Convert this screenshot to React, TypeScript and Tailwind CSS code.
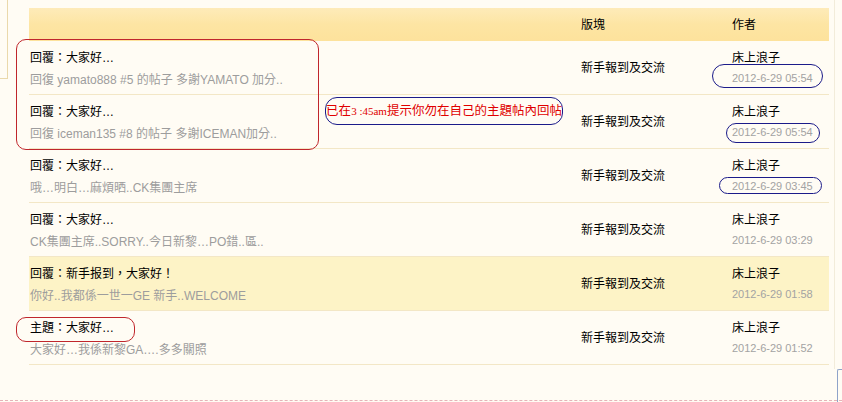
import React from 'react';

type Post = {
  title: string;
  summary: string;
  forum: string;
  author: string;
  date: string;
  hot?: boolean;
};

const posts: Post[] = [
  { title: '回覆：大家好…', summary: '回復 yamato888 #5 的帖子 多謝YAMATO 加分..', forum: '新手報到及交流', author: '床上浪子', date: '2012-6-29 05:54' },
  { title: '回覆：大家好…', summary: '回復 iceman135 #8 的帖子 多謝ICEMAN加分..', forum: '新手報到及交流', author: '床上浪子', date: '2012-6-29 05:54' },
  { title: '回覆：大家好…', summary: '哦…明白…麻煩晒..CK集團主席', forum: '新手報到及交流', author: '床上浪子', date: '2012-6-29 03:45' },
  { title: '回覆：大家好…', summary: 'CK集團主席..SORRY..今日新黎…PO錯..區..', forum: '新手報到及交流', author: '床上浪子', date: '2012-6-29 03:29' },
  { title: '回覆：新手报到，大家好！', summary: '你好..我都係一世一GE 新手..WELCOME', forum: '新手報到及交流', author: '床上浪子', date: '2012-6-29 01:58', hot: true },
  { title: '主題：大家好…', summary: '大家好…我係新黎GA….多多關照', forum: '新手報到及交流', author: '床上浪子', date: '2012-6-29 01:52' },
];

const font = 'font-["Liberation_Sans","Noto_Sans_CJK_TC",sans-serif]';

export default function App() {
  return (
    <div className={`relative w-[842px] h-[402px] overflow-hidden bg-[#fffcf4] text-[12px] text-black ${font}`}>
      <div className="flex h-[400px]">
        {/* left panel edge */}
        <div className="w-[8px] h-[79px] shrink-0 border-r border-b border-[#ead9ab]" />

        {/* post table */}
        <div className="ml-[21px] mt-[8px] w-[800px] shrink-0">
          <div className="grid grid-cols-[551px_151px_98px] h-[33px] items-center bg-gradient-to-b from-[#feebb9] via-[#fde5a3] to-[#fde29c]">
            <div />
            <div className="pl-px">版塊</div>
            <div className="pl-px">作者</div>
          </div>
          {posts.map((p, i) => (
            <div
              key={i}
              className={`grid grid-cols-[551px_151px_98px] h-[54px] border-b border-[#f3e7c6] ${p.hot ? 'bg-[#fdf3c6]' : ''}`}
            >
              <div className="pl-px pt-[7px]">
                <div className="leading-[20px]">{p.title}</div>
                <div className="leading-[20px] mt-[2px] text-[#9d9d9d]">{p.summary}</div>
              </div>
              <div className="pl-px flex items-center">{p.forum}</div>
              <div className="pl-px pt-[7px]">
                <div className="leading-[20px]">{p.author}</div>
                <div className="leading-[20px] text-[11px] text-[#a3a3a3]">{p.date}</div>
              </div>
            </div>
          ))}
        </div>

        {/* right frame edge */}
        <div className="ml-[5px] w-px h-[369px] bg-[#f2ecda]" />
        <div className="ml-[3px] mt-[369px] w-[10px] h-[40px] border-l border-t border-[#8fa3c9] rounded-tl-[2px]" />
      </div>
      <div className="border-t border-dashed border-[#e6b3b8]" />

      {/* annotations drawn over the screenshot */}
      <div className="absolute left-[16px] top-[39px] w-[303px] h-[111px] rounded-[10px] border-[1.5px] border-[#c0262c]" />
      <div className="absolute left-[325px] top-[97px] w-[238px] h-[28px] rounded-[12px] border-[1.5px] border-[#1b1b8a] flex items-center justify-center whitespace-nowrap text-[12.5px] text-[#e00000] font-['Liberation_Serif','Noto_Sans_CJK_TC',serif]">
        已在<span className="text-[11px]">3 :45am</span>提示你勿在自己的主題帖內回帖
      </div>
      <div className="absolute left-[712px] top-[64px] w-[111px] h-[24px] rounded-[12px] border-[1.5px] border-[#1b1b8a]" />
      <div className="absolute left-[726px] top-[123px] w-[94px] h-[20px] rounded-full border-[1.5px] border-[#1b1b8a]" />
      <div className="absolute left-[719px] top-[177px] w-[103px] h-[17px] rounded-full border-[1.5px] border-[#1b1b8a]" />
      <div className="absolute left-[16px] top-[317px] w-[119px] h-[25px] rounded-[10px] border-[1.5px] border-[#c0262c]" />
    </div>
  );
}
